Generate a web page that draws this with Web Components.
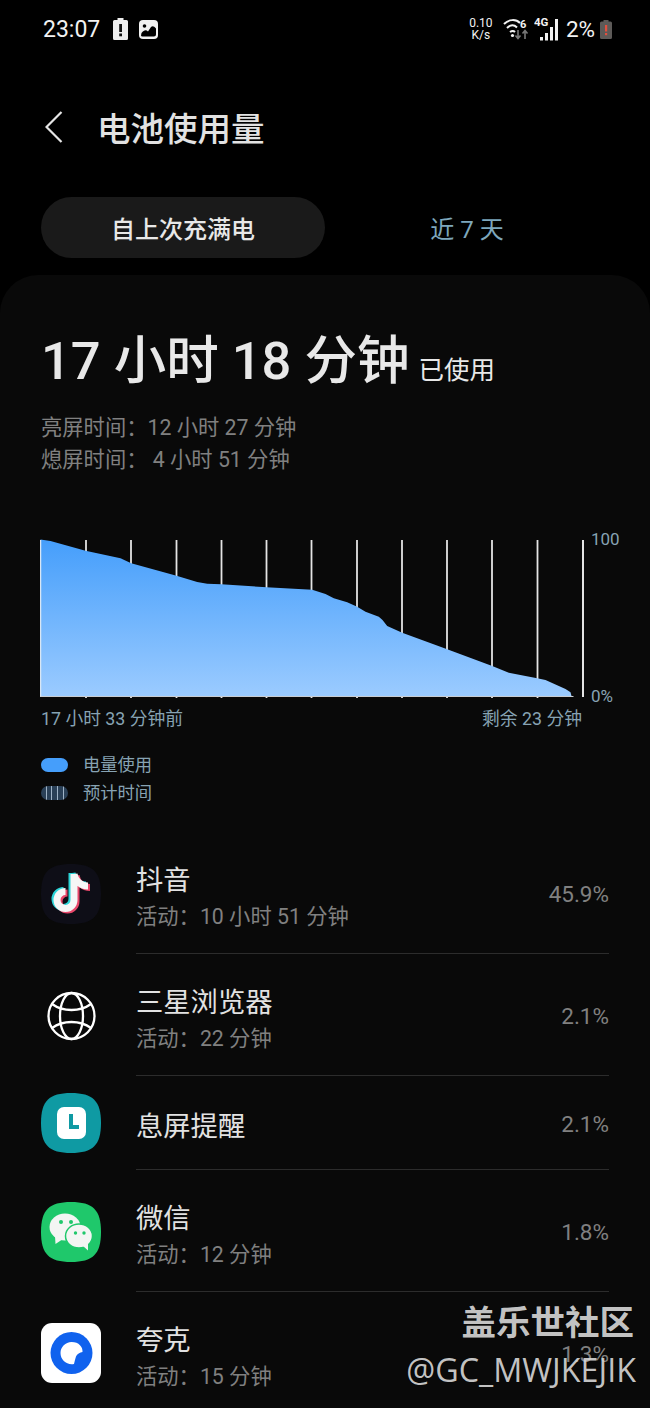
<!DOCTYPE html>
<html lang="zh-CN">
<head>
<meta charset="utf-8">
<title>电池使用量</title>
<style>
    html, body { margin: 0; padding: 0; background: #000; }
    body {
        width: 650px;
        height: 1408px;
        overflow: hidden;
        font-family: Roboto, "Noto Sans CJK SC", sans-serif;
        color: #e9e9e9;
    }
</style>
</head>
<body>
<battery-page>
    <status-bar></status-bar>
    <app-header title="电池使用量"></app-header>
    <period-tabs active="自上次充满电" other="近 7 天"></period-tabs>
    <usage-card>
        <usage-summary></usage-summary>
        <usage-chart></usage-chart>
        <app-row name="抖音" detail="活动：10 小时 51 分钟" percent="45.9%">
            <svg slot="icon" width="60" height="60" viewBox="0 0 60 60">
                <path d="M30 0C52 0 60 8 60 30S52 60 30 60 0 52 0 30 8 0 30 0Z" fill="#0e0e17"/>
                <g fill="none" stroke-width="7">
                    <path d="M33 10V36A8.500 8.500 0 1 1 24.500 27.500M33 10C34 17 40 22 47 22" stroke="#2ad4d8" transform="translate(-2 -1)"/>
                    <path d="M33 10V36A8.500 8.500 0 1 1 24.500 27.500M33 10C34 17 40 22 47 22" stroke="#e8476a" transform="translate(2 1.500)"/>
                    <path d="M33 10V36A8.500 8.500 0 1 1 24.500 27.500M33 10C34 17 40 22 47 22" stroke="#f6f6f6"/>
                </g>
            </svg>
        </app-row>
        <app-row name="三星浏览器" detail="活动：22 分钟" percent="2.1%">
            <svg slot="icon" width="60" height="60" viewBox="0 0 60 60" fill="none" stroke="#fff" stroke-width="2.300">
                <circle cx="30.500" cy="30" r="23"/>
                <ellipse cx="30.500" cy="30" rx="11.500" ry="23"/>
                <path d="M11 18C22 26 39 26 50 18M11 42C22 34 39 34 50 42"/>
            </svg>
        </app-row>
        <app-row single name="息屏提醒" percent="2.1%">
            <svg slot="icon" width="60" height="60" viewBox="0 0 60 60">
                <path d="M30 0C52 0 60 8 60 30S52 60 30 60 0 52 0 30 8 0 30 0Z" fill="#0f9aa3"/>
                <rect x="16" y="14" width="29" height="32" rx="7" fill="#fff"/>
                <path d="M30 21V34H38" fill="none" stroke="#0f9aa3" stroke-width="4"/>
            </svg>
        </app-row>
        <app-row name="微信" detail="活动：12 分钟" percent="1.8%">
            <svg slot="icon" width="60" height="60" viewBox="0 0 60 60">
                <path d="M30 0C52 0 60 8 60 30S52 60 30 60 0 52 0 30 8 0 30 0Z" fill="#1fc86b"/>
                <ellipse cx="24" cy="25" rx="15.500" ry="13.500" fill="#f3f5f3"/>
                <path d="M14 34L14.500 42L22 37Z" fill="#f3f5f3"/>
                <ellipse cx="38" cy="34" rx="13.500" ry="12" fill="#f3f5f3" stroke="#1fc86b" stroke-width="1.500"/>
                <path d="M42 44L47 48.500L47 41Z" fill="#f3f5f3"/>
                <circle cx="20" cy="20" r="2" fill="#1fc86b"/>
                <circle cx="30" cy="20" r="2" fill="#1fc86b"/>
                <circle cx="34.500" cy="31" r="1.700" fill="#1fc86b"/>
                <circle cx="43" cy="31" r="1.700" fill="#1fc86b"/>
            </svg>
        </app-row>
        <app-row name="夸克" detail="活动：15 分钟" percent="1.3%">
            <svg slot="icon" width="60" height="60" viewBox="0 0 60 60">
                <rect width="60" height="60" rx="11" fill="#fff"/>
                <circle cx="30.500" cy="30" r="21" fill="#1062ee"/>
                <path d="M30.500 19C38 19 42 24 41.500 29C39 29.500 36 31 35 33.500C34 36.500 33.500 39.500 33 41C26 42.500 19.500 37 19.500 30C19.500 24 24.500 19 30.500 19Z" fill="#fff"/>
            </svg>
        </app-row>
    </usage-card>
    <water-mark></water-mark>
</battery-page>

<script>
class BatteryPage extends HTMLElement {
    constructor() {
        super();
        this.attachShadow({ mode: 'open' });
    }

    connectedCallback() {
        this.shadowRoot.innerHTML = `
            <style>
                :host {
                    display: block;
                    position: relative;
                    width: 650px;
                    height: 1408px;
                    overflow: hidden;
                }
            </style>
            <slot></slot>
        `;
    }
}

class StatusBar extends HTMLElement {
    constructor() {
        super();
        this.attachShadow({ mode: 'open' });
    }

    connectedCallback() {
        this.shadowRoot.innerHTML = `
            <style>
                :host {
                    display: flex;
                    align-items: center;
                    height: 58px;
                    padding: 0 38px 0 43px;
                    box-sizing: border-box;
                    color: #f2f2f2;
                }
                .time { font-size: 23px; width: 70px; }
                .left { display: flex; align-items: center; gap: 11px; }
                .right { display: flex; align-items: center; margin-left: auto; }
                .speed {
                    font-size: 12px;
                    line-height: 12px;
                    text-align: center;
                    width: 26px;
                    margin-right: 7px;
                }
                .level { font-size: 22.500px; margin: 0 5px 0 6px; }
                svg { display: block; }
            </style>
            <span class="time">23:07</span>
            <div class="left">
                <svg width="15" height="22" viewBox="0 0 15 22">
                    <path d="M4.500 0H10.500V2H13.500Q15 2 15 3.500V20.500Q15 22 13.500 22H1.500Q0 22 0 20.500V3.500Q0 2 1.500 2H4.500Z" fill="#eee"/>
                    <rect x="6.200" y="6" width="2.800" height="8" fill="#111"/>
                    <rect x="6.200" y="15.500" width="2.800" height="2.800" fill="#111"/>
                </svg>
                <svg width="19" height="19" viewBox="0 0 19 19">
                    <rect width="19" height="19" rx="4" fill="#f2f2f2"/>
                    <circle cx="5.500" cy="6" r="1.800" fill="#000"/>
                    <path d="M2 15.500L2.500 13C5 10 7 9.500 9 11.500L12 7C13.500 5.500 15 6 17 8.500V14.500Q17 16.500 15 16.500H3.500Q2 16.500 2 15.500Z" fill="#000"/>
                </svg>
            </div>
            <div class="right">
                <div class="speed">0.10<br>K/s</div>
                <svg width="28" height="24" viewBox="0 0 28 24" fill="none">
                    <path d="M3 7C8 2 15 2 19 6M6 11C9.500 7.500 13 7.500 16 10.500M9 15C11 13.500 12.500 13.500 14 15" stroke="#f2f2f2" stroke-width="2"/>
                    <circle cx="11.500" cy="18.500" r="1.600" fill="#f2f2f2"/>
                    <text x="19" y="11" font-size="11" font-weight="700" fill="#f2f2f2" font-family="Roboto, sans-serif">6</text>
                    <path d="M17 13V21M14.500 18.500L17 21.500L19.500 18.500" stroke="#777" stroke-width="1.600"/>
                    <path d="M24 22V14M21.500 16.500L24 13.500L26.500 16.500" stroke="#777" stroke-width="1.600"/>
                </svg>
                <svg width="26" height="26" viewBox="0 0 26 26" style="margin-left:5px">
                    <text x="0" y="10" font-size="11.500" font-weight="700" fill="#f2f2f2" font-family="Roboto, sans-serif">4G</text>
                    <rect x="6" y="21" width="3" height="3.500" fill="#f2f2f2"/>
                    <rect x="11" y="17" width="3" height="7.500" fill="#f2f2f2"/>
                    <rect x="16" y="11" width="3" height="13.500" fill="#f2f2f2"/>
                    <rect x="21" y="3" width="3" height="21.500" fill="#f2f2f2"/>
                </svg>
                <span class="level">2%</span>
                <svg width="12" height="19" viewBox="0 0 12 19">
                    <path d="M3.500 0H8.500V1.500H10.500Q12 1.500 12 3V17.500Q12 19 10.500 19H1.500Q0 19 0 17.500V3Q0 1.500 1.500 1.500H3.500Z" fill="#5d5a58"/>
                    <rect x="5" y="5" width="2.200" height="6.500" fill="#e2503f"/>
                    <rect x="5" y="13" width="2.200" height="2.200" fill="#e2503f"/>
                </svg>
            </div>
        `;
    }
}

class AppHeader extends HTMLElement {
    constructor() {
        super();
        this.attachShadow({ mode: 'open' });
    }

    connectedCallback() {
        this.shadowRoot.innerHTML = `
            <style>
                :host {
                    display: flex;
                    align-items: center;
                    height: 139px;
                    padding: 0 0 3px 45px;
                    box-sizing: border-box;
                    gap: 34px;
                }
                svg { display: block; margin-top: 2px; }
                h1 {
                    margin: 0;
                    font-size: 33.500px;
                    font-weight: 500;
                    color: #e2e2e2;
                }
            </style>
            <svg width="18" height="32" viewBox="0 0 18 32" fill="none" stroke="#e6e6e6" stroke-width="2.200">
                <path d="M16.500 1L1.500 16L16.500 31"/>
            </svg>
            <h1>${this.getAttribute('title')}</h1>
        `;
    }
}

class PeriodTabs extends HTMLElement {
    constructor() {
        super();
        this.attachShadow({ mode: 'open' });
    }

    connectedCallback() {
        this.shadowRoot.innerHTML = `
            <style>
                :host {
                    display: flex;
                    padding: 0 41px;
                    margin-bottom: 17px;
                }
                div {
                    flex: 1;
                    height: 61px;
                    display: flex;
                    align-items: center;
                    justify-content: center;
                    border-radius: 31px;
                    font-size: 24px;
                }
                .on { background: #1a1a1a; color: #e8e8e8; font-weight: 500; }
                .off { color: #7ea7bd; }
            </style>
            <div class="on">${this.getAttribute('active')}</div>
            <div class="off">${this.getAttribute('other')}</div>
        `;
    }
}

class UsageCard extends HTMLElement {
    constructor() {
        super();
        this.attachShadow({ mode: 'open' });
    }

    connectedCallback() {
        this.shadowRoot.innerHTML = `
            <style>
                :host {
                    display: block;
                    background: #090909;
                    border-radius: 38px 38px 0 0;
                    padding-top: 56px;
                }
            </style>
            <slot></slot>
        `;
    }
}

class UsageSummary extends HTMLElement {
    constructor() {
        super();
        this.attachShadow({ mode: 'open' });
    }

    connectedCallback() {
        this.shadowRoot.innerHTML = `
            <style>
                :host { display: block; padding-left: 41px; }
                .total {
                    display: flex;
                    align-items: baseline;
                    gap: 9px;
                    height: 60px;
                    line-height: 60px;
                    font-size: 52.500px;
                    font-weight: 500;
                    color: #e8e8e8;
                    white-space: nowrap;
                }
                .total span { font-size: 25.500px; font-weight: 400; }
                .times {
                    margin-top: 21px;
                    font-size: 21.300px;
                    line-height: 32px;
                    color: #808080;
                }
            </style>
            <div class="total">17 小时 18 分钟 <span>已使用</span></div>
            <div class="times">
                亮屏时间：12 小时 27 分钟<br>
                熄屏时间： 4 小时 51 分钟
            </div>
        `;
    }
}

class UsageChart extends HTMLElement {
    constructor() {
        super();
        this.attachShadow({ mode: 'open' });
    }

    connectedCallback() {
        const ticks = [85.5, 130.5, 176, 221, 266, 311, 356.5, 401.5, 446.5, 491.5, 537];
        const curve = '40,539.5 50,541 85,550.7 120,558.3 130.7,563.3 176,575.7 196.7,582 206.7,583.7 220.7,584.3 266,587.3 311.7,589.7 325,594 333.3,598.3 346.7,602.3 356.7,606.7 365,611.7 378.3,616.7 382,620 386.7,626 401.7,632.7 446.7,649.3 491.7,666 508.3,672.7 525,676 536.7,678.3 545,680 565,689 570,692.3 571,696 40,696';
        const lines = ticks.map(x => `<line x1="${x}" x2="${x}" y1="540" y2="698"/>`).join('');
        this.shadowRoot.innerHTML = `
            <style>
                :host {
                    display: block;
                    margin-top: 62px;
                    padding-left: 40px;
                    color: #87a3b3;
                }
                .plot { display: flex; }
                svg { display: block; flex: none; }
                .axis {
                    display: flex;
                    flex-direction: column;
                    justify-content: space-between;
                    height: 177px;
                    margin: -9px 0 0 7px;
                    font-size: 17px;
                    line-height: 20px;
                }
                .range {
                    display: flex;
                    justify-content: space-between;
                    width: 542px;
                    margin-top: 2px;
                    font-size: 17.800px;
                    line-height: 22px;
                    padding-left: 1px;
                    box-sizing: border-box;
                }
                .legend {
                    margin: 24px 0 28px 1px;
                    display: flex;
                    flex-direction: column;
                    gap: 6px;
                    font-size: 17.300px;
                    line-height: 22px;
                }
                .legend div { display: flex; align-items: center; gap: 15px; }
                .swatch { width: 27px; height: 14px; border-radius: 7px; flex: none; }
                .used { background: #459efb; }
                .est {
                    background: repeating-linear-gradient(90deg, #2a4057 0 4.500px, #9fb3c6 4.500px 5.700px);
                }
            </style>
            <div class="plot">
                <svg width="544" height="160" viewBox="39.500 538 544 160">
                    <defs>
                        <linearGradient id="fill" x1="0" y1="0" x2="0" y2="1">
                            <stop offset="0" stop-color="#459efb"/>
                            <stop offset="1" stop-color="#9bcbff"/>
                        </linearGradient>
                    </defs>
                    <g stroke="#e4e4e4" stroke-width="1.800">${lines}</g>
                    <line x1="582.500" x2="582.500" y1="540" y2="697" stroke="#e4e4e4" stroke-width="2"/>
                    <polygon points="${curve}" fill="url(#fill)"/>
                    <line x1="40" x2="40" y1="540" y2="697" stroke="#d8e6f4" stroke-width="1.500"/>
                    <line x1="40" x2="573" y1="696.500" y2="696.500" stroke="#c9cdd2" stroke-width="1.200"/>
                </svg>
                <div class="axis"><span>100</span><span>0%</span></div>
            </div>
            <div class="range"><span>17 小时 33 分钟前</span><span>剩余 23 分钟</span></div>
            <div class="legend">
                <div><span class="swatch used"></span><span>电量使用</span></div>
                <div><span class="swatch est"></span><span>预计时间</span></div>
            </div>
        `;
    }
}

class AppRow extends HTMLElement {
    constructor() {
        super();
        this.attachShadow({ mode: 'open' });
    }

    connectedCallback() {
        const detail = this.getAttribute('detail');
        this.shadowRoot.innerHTML = `
            <style>
                :host {
                    display: flex;
                    align-items: center;
                    padding: 0 41px;
                }
                .icon { width: 60px; height: 60px; flex: none; margin-top: 1px; }
                :host([single]) .icon { margin-top: -1px; }
                ::slotted(svg) { display: block; }
                .body {
                    flex: 1;
                    display: flex;
                    margin-left: 35px;
                    border-bottom: 1px solid #2c2c2c;
                    padding: 31px 0 18px;
                }
                :host([single]) .body { padding: 33px 0 24px; }
                :host(:last-child) .body { border-bottom: 0; }
                .text { flex: 1; line-height: 36px; }
                .name { font-size: 27.300px; color: #e2e2e2; }
                .detail { font-size: 21.300px; color: #808080; }
                .percent {
                    align-self: center;
                    margin-top: -10px;
                    font-size: 22.500px;
                    color: #808080;
                }
                :host([single]) .percent { margin-top: -6px; }
            </style>
            <div class="icon"><slot name="icon"></slot></div>
            <div class="body">
                <div class="text">
                    <div class="name">${this.getAttribute('name')}</div>
                    ${detail ? `<div class="detail">${detail}</div>` : ''}
                </div>
                <div class="percent">${this.getAttribute('percent')}</div>
            </div>
        `;
    }
}

class WaterMark extends HTMLElement {
    constructor() {
        super();
        this.attachShadow({ mode: 'open' });
    }

    connectedCallback() {
        this.shadowRoot.innerHTML = `
            <style>
                :host {
                    position: absolute;
                    right: 14px;
                    top: 1301px;
                    text-align: right;
                    color: rgba(214, 214, 214, 0.92);
                    white-space: nowrap;
                }
                .brand { font-size: 34.500px; font-weight: 700; line-height: 45px; margin-right: 2px; }
                .handle { font-family: "Open Sans", sans-serif; font-size: 32.300px; line-height: 46px; }
            </style>
            <div class="brand">盖乐世社区</div>
            <div class="handle">@GC_MWJKEJIK</div>
        `;
    }
}

customElements.define('battery-page', BatteryPage);
customElements.define('status-bar', StatusBar);
customElements.define('app-header', AppHeader);
customElements.define('period-tabs', PeriodTabs);
customElements.define('usage-card', UsageCard);
customElements.define('usage-summary', UsageSummary);
customElements.define('usage-chart', UsageChart);
customElements.define('app-row', AppRow);
customElements.define('water-mark', WaterMark);
</script>
</body>
</html>
